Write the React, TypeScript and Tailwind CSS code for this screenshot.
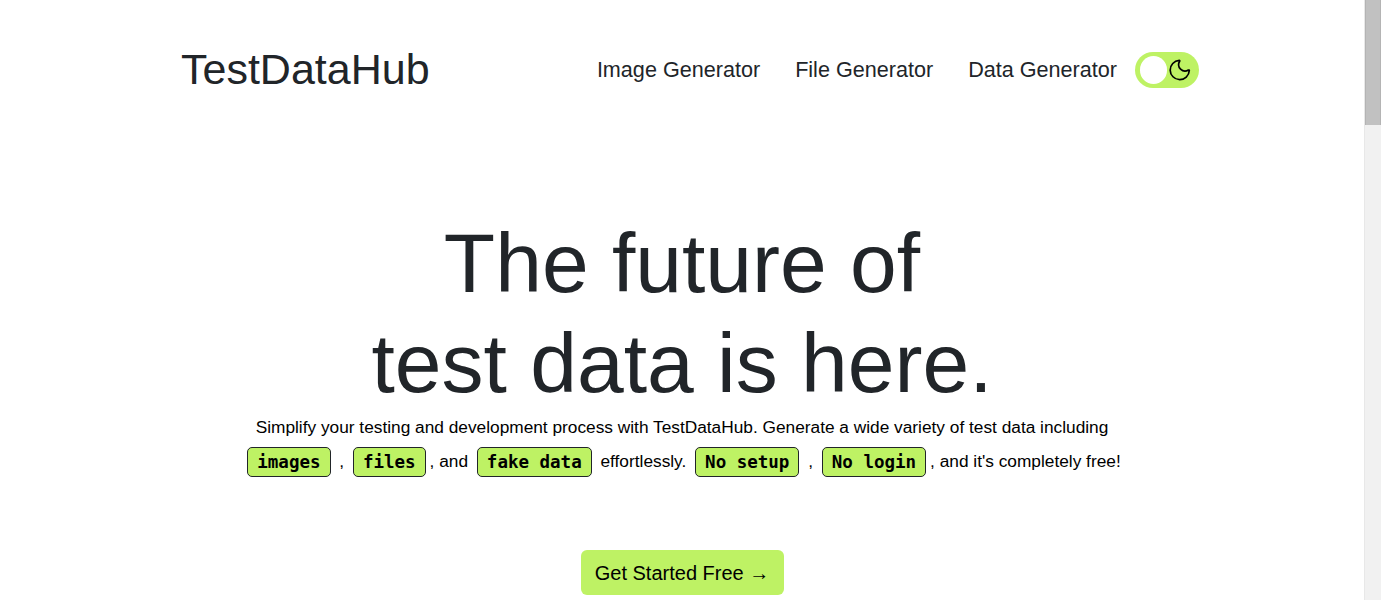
import React from "react";
import { Moon } from "lucide-react";

function Chip({ children }: { children: React.ReactNode }) {
  return (
    <code className="mx-1 my-[7px] inline-block rounded-[5px] border border-[#212529] bg-[#bef264] px-[9px] py-[2px] align-middle text-[17.5px] font-bold leading-[24px] text-black [font-family:'DejaVu_Sans_Mono','Liberation_Mono',monospace]">
      {children}
    </code>
  );
}

export default function App() {
  return (
    <div className="flex h-screen overflow-hidden bg-white text-[#212529] [font-family:'Liberation_Sans',Arial,sans-serif]">
      <div className="min-w-0 flex-1">
        <header className="mx-auto flex w-[1034px] items-center justify-between pl-4 pt-[44px]">
          <a className="text-[43px] leading-[1.2] text-[#212529]">TestDataHub</a>
          <nav className="flex items-center">
            <a className="text-[21.6px] text-[#212529]">Image Generator</a>
            <a className="ml-[35px] text-[21.6px] text-[#212529]">File Generator</a>
            <a className="ml-[35px] text-[21.6px] text-[#212529]">Data Generator</a>
            <button className="ml-[18px] flex h-[36px] w-[64px] items-center justify-between rounded-full bg-[#bef264] pl-[5px] pr-[6px]">
              <span className="h-[28px] w-[28px] rounded-full bg-white" />
              <Moon size={26} strokeWidth={1.6} className="text-black" />
            </button>
          </nav>
        </header>

        <main className="flex flex-col items-center">
          <h1 className="mt-[117px] text-center text-[84px] font-normal leading-[1.2] text-[#212529]">
            The future of
            <br />
            test data is here.
          </h1>
          <p className="w-[920px] text-center text-[17.3px] leading-[26px] text-black">
            Simplify your testing and development process with TestDataHub. Generate a wide variety of test data including{" "}
            <Chip>images</Chip> , <Chip>files</Chip>, and <Chip>fake data</Chip> effortlessly.{" "}
            <Chip>No setup</Chip> , <Chip>No login</Chip>, and it's completely free!
          </p>
          <button className="mt-[66px] h-[45px] w-[203px] rounded-[6px] bg-[#bef264] text-[20px] text-black">
            Get Started Free →
          </button>
        </main>
      </div>
      <div className="w-[17px] shrink-0 border-l border-[#e8e8e8] bg-[#f1f1f1]">
        <div className="h-[125px] w-full border-x border-[#b4b4b4] bg-[#c1c1c1]" />
      </div>
    </div>
  );
}
